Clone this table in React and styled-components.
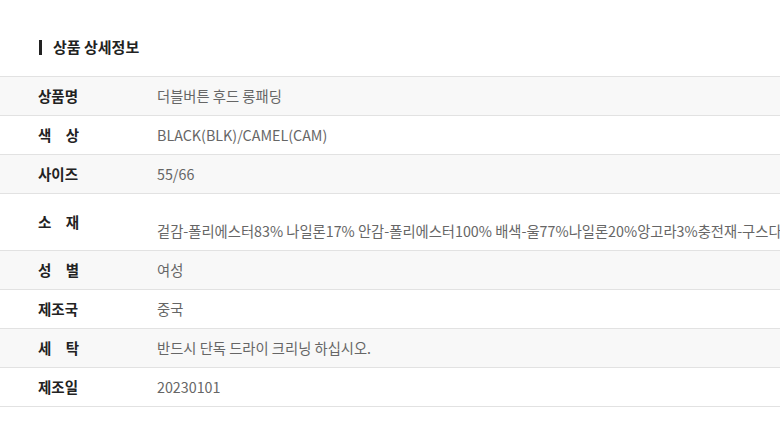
import React from "react";
import styled, { createGlobalStyle } from "styled-components";

const GlobalStyle = createGlobalStyle`
  html, body {
    margin: 0;
    padding: 0;
    background: #fff;
    overflow: hidden;
  }
  body {
    font-family: "Noto Sans CJK KR", "Noto Sans", sans-serif;
  }
`;

const rows = [
  { label: "상품명", value: "더블버튼 후드 롱패딩" },
  { label: "색　상", value: "BLACK(BLK)/CAMEL(CAM)" },
  { label: "사이즈", value: "55/66" },
  {
    label: "소　재",
    value:
      "겉감-폴리에스터83% 나일론17% 안감-폴리에스터100% 배색-울77%나일론20%앙고라3%충전재-구스다운80% 깃털20%",
    tall: true,
  },
  { label: "성　별", value: "여성" },
  { label: "제조국", value: "중국" },
  { label: "세　탁", value: "반드시 단독 드라이 크리닝 하십시오." },
  { label: "제조일", value: "20230101" },
];

const ProductInfo = () => {
  return (
    <WRAPPER>
      <Title>상품 상세정보</Title>
      <Table>
        {rows.map((row, i) => (
          <Row key={i} $shaded={i % 2 === 0} $tall={row.tall}>
            <Label $tall={row.tall}>{row.label}</Label>
            <Value $tall={row.tall}>{row.value}</Value>
          </Row>
        ))}
      </Table>
    </WRAPPER>
  );
};

export default function App() {
  return (
    <>
      <GlobalStyle />
      <ProductInfo />
    </>
  );
}

const WRAPPER = styled.div`
  width: 780px;
  padding-top: 36px;
`;

const Title = styled.h2`
  display: flex;
  align-items: center;
  gap: 11px;
  margin: 0 0 18px 39px;
  font-size: 15px;
  font-weight: 700;
  line-height: 22px;
  color: #222;

  &::before {
    content: "";
    display: block;
    width: 3px;
    height: 15px;
    background: #222;
  }
`;

const Table = styled.div`
  border-top: 1px solid #e2e2e2;
`;

const Row = styled.div`
  display: flex;
  align-items: ${(p) => (p.$tall ? "flex-start" : "center")};
  height: ${(p) => (p.$tall ? "56px" : "38px")};
  border-bottom: 1px solid #e2e2e2;
  background: ${(p) => (p.$shaded ? "#f8f8f8" : "#fff")};
  overflow: hidden;
`;

const Label = styled.div`
  flex: 0 0 119px;
  padding-left: 38px;
  padding-top: ${(p) => (p.$tall ? "18px" : "0")};
  font-size: 14.5px;
  font-weight: 700;
  color: #222;
  line-height: 20px;
`;

const Value = styled.div`
  padding-top: ${(p) => (p.$tall ? "27px" : "0")};
  font-size: 14.3px;
  font-weight: 400;
  color: #666;
  line-height: 20px;
  white-space: nowrap;
`;
